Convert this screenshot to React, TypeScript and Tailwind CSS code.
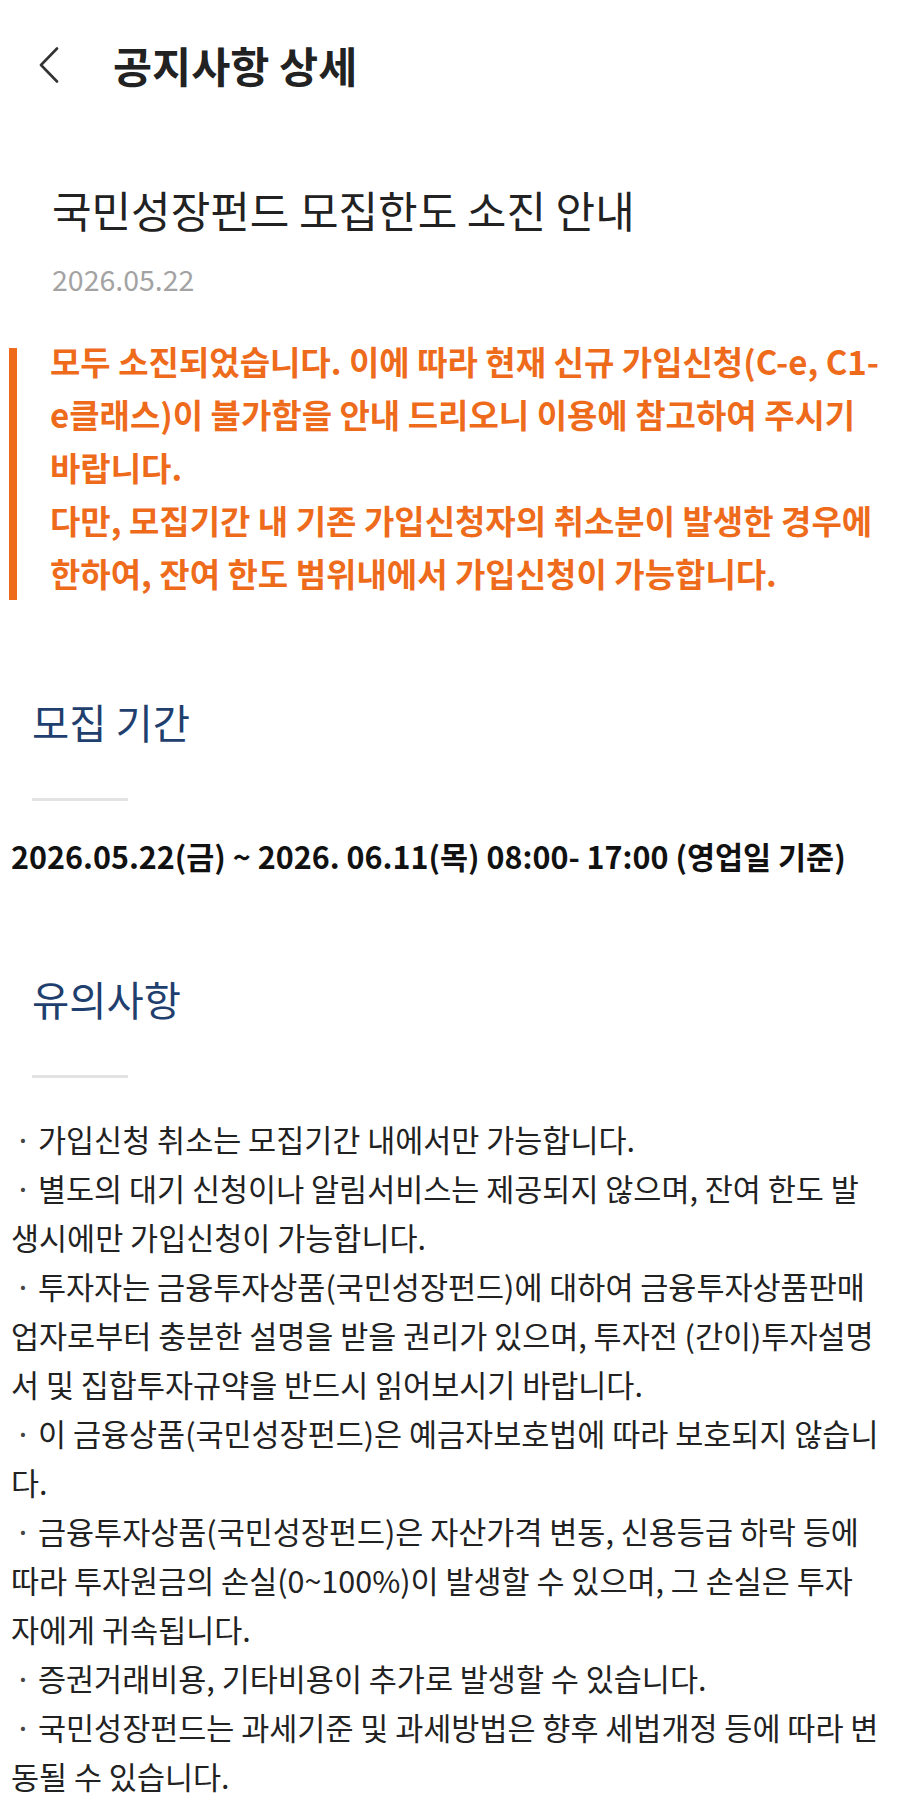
const NOTICE_LINES = [
  "모두 소진되었습니다. 이에 따라 현재 신규 가입신청(C-e, C1-",
  "e클래스)이 불가함을 안내 드리오니 이용에 참고하여 주시기",
  "바랍니다.",
  "다만, 모집기간 내 기존 가입신청자의 취소분이 발생한 경우에",
  "한하여, 잔여 한도 범위내에서 가입신청이 가능합니다.",
];

// bullet: true marks the first line of an item
const CAUTION_LINES: { text: string; bullet?: boolean }[] = [
  { text: "가입신청 취소는 모집기간 내에서만 가능합니다.", bullet: true },
  { text: "별도의 대기 신청이나 알림서비스는 제공되지 않으며, 잔여 한도 발", bullet: true },
  { text: "생시에만 가입신청이 가능합니다." },
  { text: "투자자는 금융투자상품(국민성장펀드)에 대하여 금융투자상품판매", bullet: true },
  { text: "업자로부터 충분한 설명을 받을 권리가 있으며, 투자전 (간이)투자설명" },
  { text: "서 및 집합투자규약을 반드시 읽어보시기 바랍니다." },
  { text: "이 금융상품(국민성장펀드)은 예금자보호법에 따라 보호되지 않습니", bullet: true },
  { text: "다." },
  { text: "금융투자상품(국민성장펀드)은 자산가격 변동, 신용등급 하락 등에", bullet: true },
  { text: "따라 투자원금의 손실(0~100%)이 발생할 수 있으며, 그 손실은 투자" },
  { text: "자에게 귀속됩니다." },
  { text: "증권거래비용, 기타비용이 추가로 발생할 수 있습니다.", bullet: true },
  { text: "국민성장펀드는 과세기준 및 과세방법은 향후 세법개정 등에 따라 변", bullet: true },
  { text: "동될 수 있습니다." },
];

function SectionTitle({ children }: { children: string }) {
  return (
    <>
      <h3 className="pl-[32px] text-[40.5px] leading-[52px] text-[#1f3f6e]">{children}</h3>
      <div className="ml-[32px] mt-[50px] h-[3px] w-[96px] bg-[#e3e3e3]" />
    </>
  );
}

export default function App() {
  return (
    <div className="min-h-[1814px] w-[900px] bg-white font-['Noto_Sans_CJK_KR','Noto_Sans',sans-serif] text-[#222]">
      {/* Header */}
      <header className="flex h-[130px] items-center pl-[39px]">
        <svg width="20" height="36" viewBox="0 0 20 36" fill="none">
          <path d="M18 1.5 L2 18 L18 34.5" stroke="#333" strokeWidth="2.6" strokeLinecap="round" strokeLinejoin="round" />
        </svg>
        <h1 className="ml-[54px] text-[42.5px] font-bold leading-none text-[#222]">공지사항 상세</h1>
      </header>

      {/* Title */}
      <h2 className="mt-[51px] pl-[52px] text-[43px] leading-[56px] text-[#222]">국민성장펀드 모집한도 소진 안내</h2>
      <p className="mt-[22px] pl-[52px] text-[28.5px] leading-[40px] text-[#a3a3a3]">2026.05.22</p>

      {/* Highlighted notice */}
      <div className="mt-[36px] flex">
        <div className="ml-[9px] mt-[13px] w-[8px] shrink-0 bg-[#ee6b1c]" />
        <div className="pl-[33px] text-[33px] font-bold leading-[53px] text-[#ee6b1c]">
          {NOTICE_LINES.map((line) => (
            <div key={line} className="whitespace-nowrap">
              {line}
            </div>
          ))}
        </div>
      </div>

      {/* 모집 기간 */}
      <div className="mt-[96px]">
        <SectionTitle>모집 기간</SectionTitle>
      </div>
      <p className="mt-[34px] whitespace-nowrap pl-[11px] text-[30.5px] font-bold leading-[42px] text-[#111]">
        2026.05.22(금) ~ 2026. 06.11(목) 08:00- 17:00 (영업일 기준)
      </p>

      {/* 유의사항 */}
      <div className="mt-[96px]">
        <SectionTitle>유의사항</SectionTitle>
      </div>
      <div className="mt-[37px] pl-[11px] text-[30.5px] leading-[49px] text-[#222]">
        {CAUTION_LINES.map(({ text, bullet }, i) => (
          <div key={i} className="flex whitespace-nowrap">
            {bullet && <span className="mr-[3px] inline-block w-[24px] shrink-0 text-center text-[#444]">·</span>}
            <span>{text}</span>
          </div>
        ))}
      </div>
    </div>
  );
}
